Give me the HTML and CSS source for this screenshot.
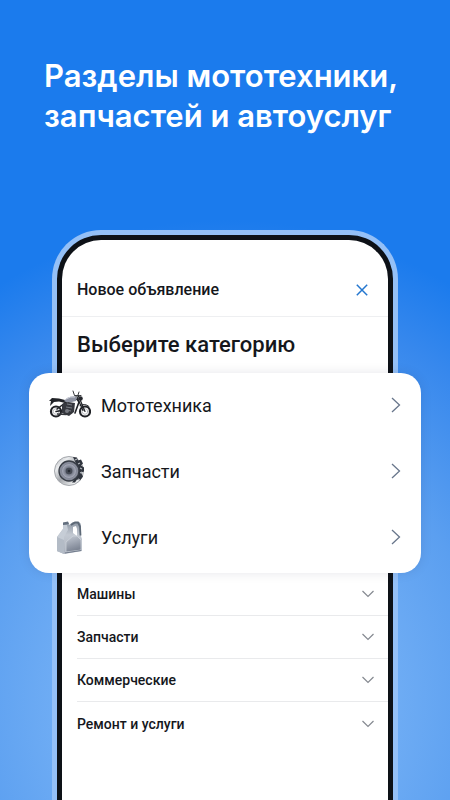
FILE: index.html
```html
<!DOCTYPE html>
<html lang="ru">
<head>
<meta charset="utf-8">
<meta name="viewport" content="width=device-width, initial-scale=1">
<title>Новое объявление</title>
<link rel="stylesheet" href="styles.css">
</head>
<body>
<main class="promo">
  <h1 class="headline">Разделы мототехники, запчастей и автоуслуг</h1>
  <section class="phone">
    <div class="screen">
      <header class="bar">
        <h2 class="bar-title">Новое объявление</h2>
        <button class="close" type="button" aria-label="Закрыть">
          <svg width="12" height="12" viewBox="0 0 12 12"><path d="M.8.8l10.4 10.4M11.2.8L.8 11.2"/></svg>
        </button>
      </header>
      <h3 class="question">Выберите категорию</h3>
      <nav class="card">
        <a class="category" href="#moto">
          <svg class="picture" viewBox="0 0 42 36">
            <g fill="none" stroke="#202227" stroke-linecap="round" stroke-linejoin="round">
              <circle cx="7" cy="24.500" r="5" stroke-width="2.200"/>
              <circle cx="36" cy="24.500" r="5" stroke-width="2.200"/>
              <g stroke="#92969e" stroke-width=".6"><circle cx="7" cy="24.500" r="2.800"/><circle cx="36" cy="24.500" r="2.800"/></g>
              <path d="M36 24.500L29.500 9M34 23.500L28 10" stroke-width="1.200"/>
              <path d="M7 24.500l11-2M8 22l8-6" stroke-width="1.500"/>
              <path d="M29.500 9l-4-.5-1.500-4.500M26 9l6-.5M29 8l1-3" stroke-width=".9"/>
              <path d="M20 14l8-2 2 3-4 11" stroke-width="1.600"/>
              <path d="M31 18.500q5-2.500 9 1" stroke-width="1"/>
            </g>
            <path d="M0 14l3-3 7 .5 8 2v3l-8-2-5 .5-4 4 1-5z" fill="#202227"/>
            <path d="M15 14l3-3q6-3 10-1l-1 4-8 2z" fill="#8d92a1"/>
            <path d="M17 12q5-3 9-2" fill="none" stroke="#cfd2dc"/>
            <path d="M13 17l6-2 7 1-1 9-5 4-7-3z" fill="#36383f"/>
            <path d="M18 17l5 1M17 20l6 1M18 23l4 1" stroke="#8b8e96" stroke-width=".8"/>
            <circle cx="18" cy="24" r="2" fill="#777a81"/>
            <path d="M8 27l9 .5 6-2" stroke="#34363b" stroke-width="1.500" fill="none"/>
            <circle cx="31.500" cy="11.500" r="2.300" fill="#25272d"/>
          </svg>
          <span>Мототехника</span>
          <svg class="arrow" viewBox="0 0 10 16"><path d="M1 1l7.500 7L1 15"/></svg>
        </a>
        <a class="category" href="#parts">
          <svg class="picture" viewBox="0 0 42 36">
            <defs>
              <linearGradient id="metal" x1="0" y1="0" x2="1" y2="1"><stop offset="0" stop-color="#9c9ea3"/><stop offset=".25" stop-color="#eceef0"/><stop offset=".5" stop-color="#a3a6ab"/><stop offset=".8" stop-color="#eef0f1"/><stop offset="1" stop-color="#93969c"/></linearGradient>
              <radialGradient id="hub"><stop offset="0" stop-color="#383d46"/><stop offset=".3" stop-color="#6d7280"/><stop offset=".65" stop-color="#a1a5b3"/><stop offset="1" stop-color="#747986"/></radialGradient>
            </defs>
            <circle cx="20" cy="18" r="14.500" fill="url(#metal)" stroke="#a5a8ad"/>
            <path d="M24 4l4 .5 1 3 3-1 2 4-2 2 3 2v4l-3 1 2 4-3 4-3-1-2 3-3 0 4-6 2-6-2-7z" fill="#30353e"/>
            <path d="M26 7l2-1M29 11l2-1M31 15l2 1M31 20l2-1M29 26l2 1" stroke="#b4b8bf" stroke-width="1.300"/>
            <circle cx="20" cy="18" r="10" fill="url(#hub)" stroke="#383d46" stroke-width="1.300"/>
            <circle cx="20" cy="18" r="7.500" fill="none" stroke="#7d8290" stroke-width=".8"/>
            <circle cx="20" cy="18" r="3.300" fill="#454a54"/>
            <circle cx="20" cy="18" r="1.300" fill="#252a32"/>
          </svg>
          <span>Запчасти</span>
          <svg class="arrow" viewBox="0 0 10 16"><path d="M1 1l7.500 7L1 15"/></svg>
        </a>
        <a class="category" href="#services">
          <svg class="picture" viewBox="0 0 42 36">
            <defs>
              <linearGradient id="can" x1="0" y1="0" x2="0" y2="1"><stop offset="0" stop-color="#8b95a2"/><stop offset=".4" stop-color="#c3c9d2"/><stop offset="1" stop-color="#a9b0bc"/></linearGradient>
              <linearGradient id="panel" x1="0" y1="0" x2=".3" y2="1"><stop offset="0" stop-color="#c4cad4"/><stop offset="1" stop-color="#7b8392"/></linearGradient>
            </defs>
            <path d="M14 4l5-1 1 3 4-3h6q2 1 2 4v10l1 3v12l-18 3-7-3V18l6-8z" fill="url(#can)"/>
            <path d="M14 6h4l1 5-4 7v16.500l-7-2.500V18l6-8z" fill="#c6cdd6"/>
            <path d="M8 18l7 3v14l-7-3z" fill="#b3bbc6"/>
            <path d="M14 3.500l5-1 1 2.500-6 1z" fill="#64707f"/>
            <path d="M24 8l3-1 1 3v7l-4-3z" fill="#fff"/>
            <path d="M22 6l4-2.500h3l2 4 .5 9" fill="none" stroke="#5c6876" stroke-width="1.800"/>
            <path d="M17 33V23l7-6h4l4 4v10z" fill="url(#panel)" stroke="#d0d5dd" stroke-width=".7"/>
            <path d="M16 34l16-2.500" stroke="#727c8c"/>
          </svg>
          <span>Услуги</span>
          <svg class="arrow" viewBox="0 0 10 16"><path d="M1 1l7.500 7L1 15"/></svg>
        </a>
      </nav>
      <div class="sections">
        <button class="section" type="button">Машины<svg class="chevron" viewBox="0 0 12 8"><path d="M.5 1L6 6.500 11.500 1"/></svg></button>
        <button class="section" type="button">Запчасти<svg class="chevron" viewBox="0 0 12 8"><path d="M.5 1L6 6.500 11.500 1"/></svg></button>
        <button class="section" type="button">Коммерческие<svg class="chevron" viewBox="0 0 12 8"><path d="M.5 1L6 6.500 11.500 1"/></svg></button>
        <button class="section" type="button">Ремонт и услуги<svg class="chevron" viewBox="0 0 12 8"><path d="M.5 1L6 6.500 11.500 1"/></svg></button>
      </div>
    </div>
  </section>
</main>
</body>
</html>
```
FILE: styles.css
```css
* {
  box-sizing: border-box;
}

body {
  margin: 0;
  font-family: Roboto, "Liberation Sans", sans-serif;
  color: #15171c;
}

h1, h2, h3 {
  margin: 0;
}

button {
  font: inherit;
  color: inherit;
  background: none;
  border: 0;
  padding: 0;
}

svg {
  flex: none;
}

.promo {
  display: flex;
  flex-direction: column;
  min-height: 100vh;
  background: radial-gradient(ellipse 100% 480px at 50% 700px, #7ab4f7 0%, #6eacf4 38%, #5b9ff0 58%, #3788ed 84%, #1b7bed 100%);
}

.headline {
  padding: 56px 40px 0 44px;
  font-family: Inter, "Open Sans", sans-serif;
  font-size: 31px;
  line-height: 40px;
  font-weight: 600;
  color: #fff;
}

.phone {
  display: flex;
  flex: 1;
  margin: 94px 52px 0;
  border: 5px solid #94c0f7;
  border-bottom: 0;
  border-radius: 49px 49px 0 0;
  background: #94c0f7;
}

.screen {
  flex: 1;
  min-width: 0;
  border: 5px solid #0d1117;
  border-bottom: 0;
  border-radius: 44px 44px 0 0;
  background: #fff;
}

.bar {
  display: flex;
  align-items: center;
  justify-content: space-between;
  height: 77px;
  padding: 24px 20px 0 15px;
  border-bottom: 1px solid #eeeff1;
}

.bar-title {
  font-size: 16px;
  line-height: 20px;
  font-weight: 500;
}

.close {
  display: flex;
}

.close svg {
  fill: none;
  stroke: #2477cf;
  stroke-width: 1.5;
}

.question {
  padding: 14px 15px;
  font-size: 22px;
  line-height: 28px;
  font-weight: 500;
}

.card {
  position: relative;
  display: flex;
  flex-direction: column;
  margin: 0 -33px;
  padding-bottom: 2px;
  border-radius: 20px;
  background: #fff;
  box-shadow: 0 0 12px rgba(0, 20, 50, .1);
}

.category {
  display: flex;
  align-items: center;
  gap: 10px;
  height: 66px;
  padding: 0 20px 2px;
  font-size: 18px;
  color: inherit;
  text-decoration: none;
}

.picture {
  width: 42px;
  height: 36px;
}

.arrow {
  width: 10px;
  height: 16px;
  margin-left: auto;
  fill: none;
  stroke: #68768b;
  stroke-width: 1.3;
}

.sections {
  display: flex;
  flex-direction: column;
  padding-left: 15px;
}

.section {
  display: flex;
  align-items: center;
  justify-content: space-between;
  height: 43px;
  padding-right: 14px;
  border-bottom: 1px solid #e9eaec;
  font-size: 14px;
  font-weight: 500;
}

.section:last-child {
  border-bottom: 0;
}

.chevron {
  width: 12px;
  height: 8px;
  fill: none;
  stroke: #858990;
  stroke-width: 1.2;
}
```
